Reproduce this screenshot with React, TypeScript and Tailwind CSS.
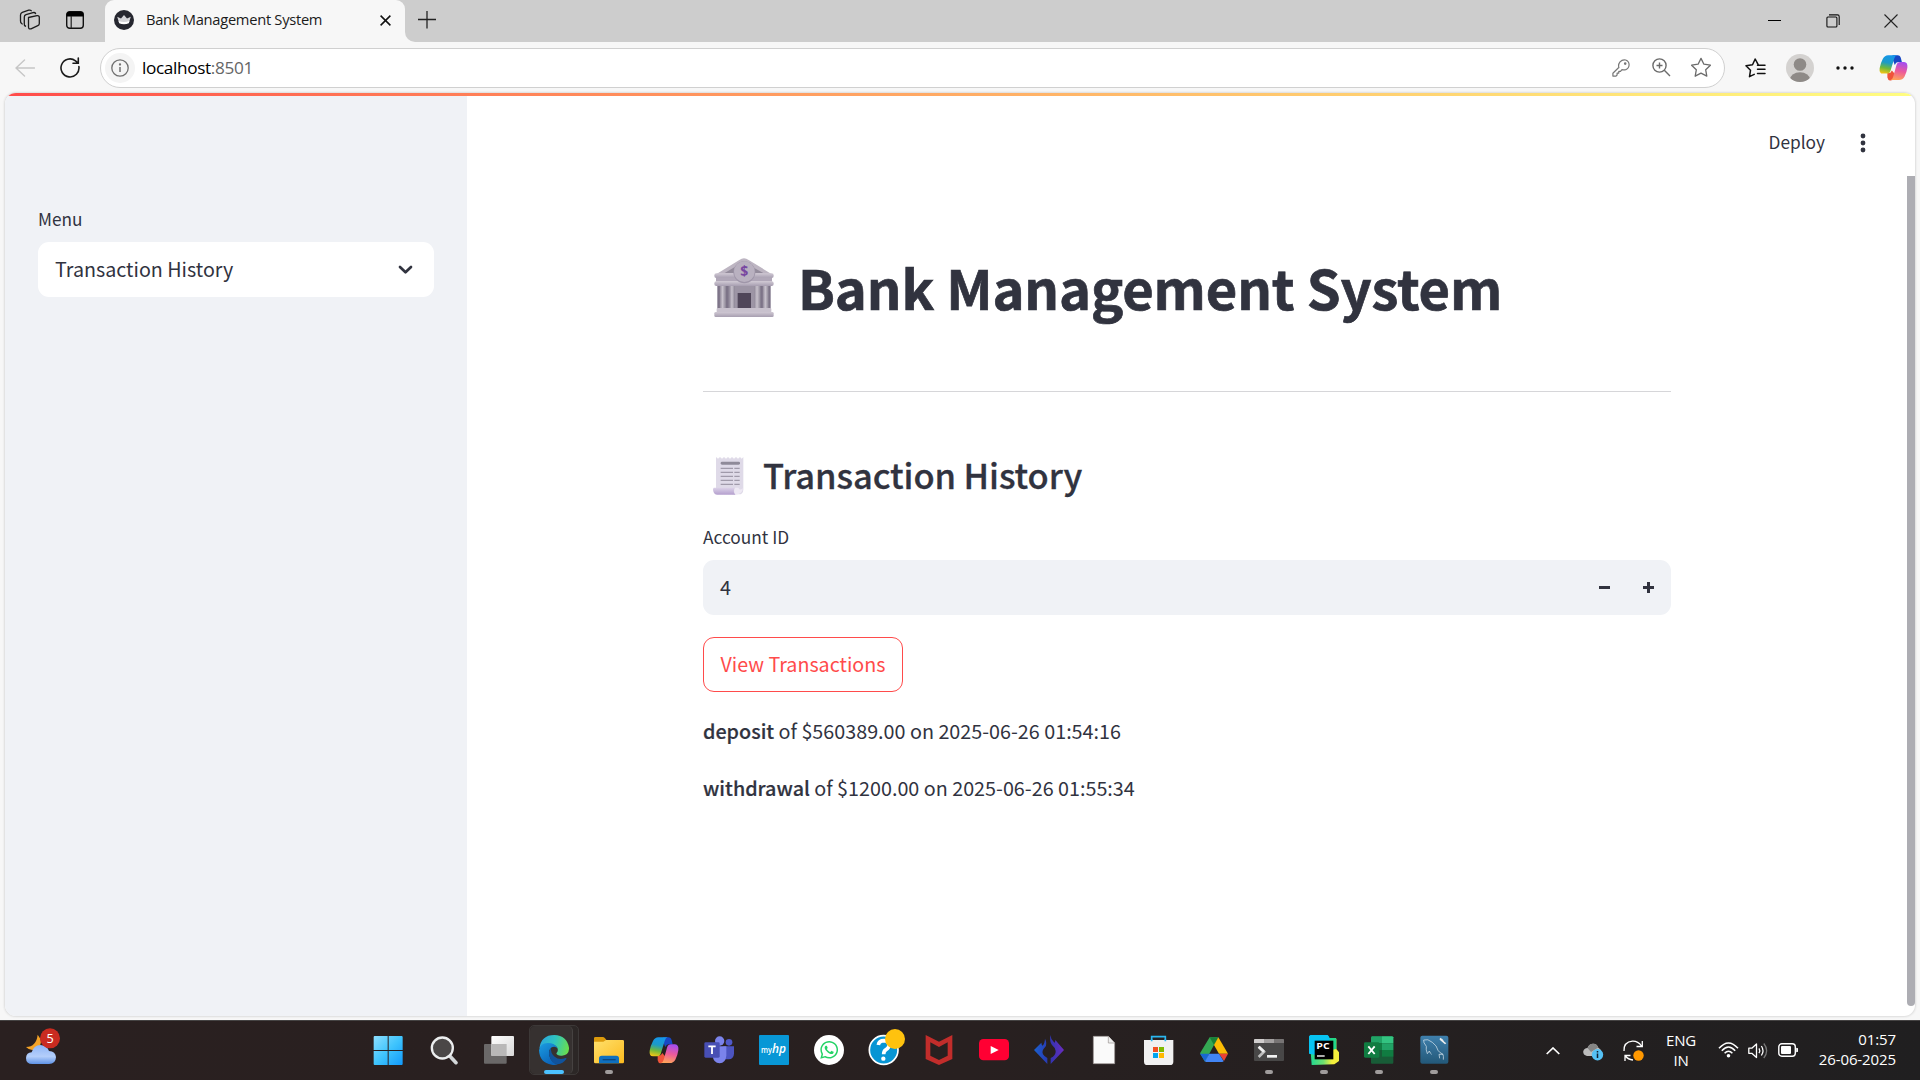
import React from "react";
import { FaWhatsapp } from "react-icons/fa";

const uiFont = "font-['Open_Sans','Noto_Sans',sans-serif]";
const appFont = "font-['Noto_Sans_CJK_SC',sans-serif]";

function TabBar() {
  return (
    <div className="flex h-[42px] w-full bg-[#cdcdcd]">
      <div className="flex w-[105px] items-center rounded-br-[10px] bg-[#cdcdcd] pb-[2px]">
        <svg className="ml-[19px]" width="22" height="22" viewBox="0 0 22 22" fill="none" stroke="#1b1b1b" strokeWidth="1.3" strokeLinejoin="round" strokeLinecap="round">
          <path d="M9.5 8.5 L18 6.6 Q20.3 6.3 20.3 8.5 V14.5 Q20.3 16 18.8 16.7 L12 19.8 Q9.5 20.5 9.5 18 Z" />
          <path d="M6.5 17.2 Q5 16.5 5.3 14.5 V8 Q5.3 6.3 7 5.7 L14 3.6 Q16 3.2 16.6 4.6" />
          <path d="M3.2 15 Q1.3 14 1.5 12 V6 Q1.6 4.1 3.3 3.4 L9.7 1.2 Q11.5 .8 12.2 1.7" />
        </svg>
        <svg className="ml-[25px]" width="18" height="18" viewBox="0 0 18 18">
          <rect x=".7" y=".7" width="16.6" height="16.6" rx="3" fill="none" stroke="#111" strokeWidth="1.4" />
          <path d="M.7 5.5 V3.5 Q.7 .7 3.5 .7 H14.5 Q17.3 .7 17.3 3.5 V5.5Z" fill="#000" />
          <path d="M5.2 5 V17" stroke="#222" strokeWidth="1.2" />
        </svg>
      </div>
      <div className="flex bg-[#f7f7f7]">
        <div className="-ml-[10px] h-[42px] w-[10px] rounded-br-[10px] bg-[#cdcdcd]" />
        <div className="h-[42px] w-[300px] bg-[#cdcdcd]">
          <div className="flex h-full items-center rounded-t-[9px] bg-[#f7f7f7] pb-[2px]">
            <svg className="ml-[9px]" width="20" height="20" viewBox="0 0 20 20">
              <circle cx="10" cy="10" r="10" fill="#262730" />
              <path d="M3.2 6.8 L7 8.6 L10 5 L13 8.6 L16.8 6.8 L15 12.6 Q10 15 5 12.6Z" fill="#d4d4d8" />
              <path d="M4.6 11 Q10 13 15.4 11 L14.8 13.2 Q10 15.2 5.2 13.2Z" fill="#fff" />
            </svg>
            <span className={`${uiFont} -mt-[2px] ml-[12px] w-[220px] whitespace-nowrap text-[14.7px] leading-5 tracking-[-0.28px] text-[#1b1b1b]`}>Bank Management System</span>
            <svg className="ml-[14px] mt-px" width="11" height="11" viewBox="0 0 11 11" stroke="#111" strokeWidth="1.5">
              <path d="M.6 .6 L10.4 10.4 M10.4 .6 L.6 10.4" />
            </svg>
          </div>
        </div>
        <div className="h-[42px] w-[10px] bg-[#f7f7f7]">
          <div className="h-full rounded-bl-[10px] bg-[#cdcdcd]" />
        </div>
      </div>
      <svg className="ml-[3px] mt-[11px]" width="18" height="18" viewBox="0 0 18 18" stroke="#222" strokeWidth="1.3">
        <path d="M9 0 V17.5 M0 8.5 H18" />
      </svg>
      <div className="flex-1" />
      <div className="flex h-[42px] items-center pr-[22px]">
        <svg width="13" height="13" viewBox="0 0 13 13" stroke="#000"><path d="M0 5.5 H13" /></svg>
        <svg className="ml-[45px]" width="14" height="14" viewBox="0 0 14 14" fill="none" stroke="#111" strokeWidth="1.1">
          <rect x=".9" y="3" width="10" height="10" rx="1" />
          <path d="M3 .9 H11.5 Q13.2 .9 13.2 2.8 V11" />
        </svg>
        <svg className="ml-[44px]" width="14" height="14" viewBox="0 0 14 14" stroke="#222" strokeWidth="1.1"><path d="M.5 .5 L13.5 13.5 M13.5 .5 L.5 13.5" /></svg>
      </div>
    </div>
  );
}

function CopilotIcon({ size, id }: { size: number; id: string }) {
  return (
    <svg width={size} height={size} viewBox="0 0 90 90">
      <defs>
        <linearGradient id={`${id}a`} x1="0.5" y1="0" x2="0.3" y2="1">
          <stop offset="0" stopColor="#1596ea" /><stop offset=".4" stopColor="#1c9bc8" /><stop offset=".7" stopColor="#6fb93c" /><stop offset="1" stopColor="#f3c515" />
        </linearGradient>
        <linearGradient id={`${id}b`} x1="0.6" y1="0" x2="0.4" y2="1">
          <stop offset="0" stopColor="#a44df0" /><stop offset=".5" stopColor="#ec5a9c" /><stop offset="1" stopColor="#ffa35a" />
        </linearGradient>
      </defs>
      <path d="M42 7 H58 Q66 7 68 16 L71 28 H60 Q52 28 49 37 L40 14Z" fill="#1747c4" />
      <path d="M26 62 Q36 64 40 54 L50 66 L46 78 Q43 85 36 85 H34 Q28 85 26 76Z" fill="#f0543a" />
      <path d="M28 7 H56 Q50 8 47 18 L36 54 Q33 64 25 64 H12 Q0 64 2 47 Q5 31 12 18 Q18 7 28 7Z" fill={`url(#${id}a)`} />
      <path d="M62 84 H36 Q42 82 44 74 L54 38 Q57 28 66 28 H78 Q90 29 88 46 Q86 61 79 74 Q73 84 62 84Z" fill={`url(#${id}b)`} />
    </svg>
  );
}

function Toolbar() {
  return (
    <div className="flex h-[51px] items-center bg-[#f7f7f7]">
      <svg className="ml-[15px]" width="20" height="18" viewBox="0 0 20 18" fill="none" stroke="#c6c6c6" strokeWidth="1.4" strokeLinecap="round">
        <path d="M9.5 1 L1 9 L9.5 17 M1 9 H19.5" />
      </svg>
      <svg className="ml-[25px]" width="20" height="21" viewBox="0 0 20 21" fill="none" stroke="#1b1b1b" strokeWidth="1.6" strokeLinecap="round">
        <path d="M18.9 9.6 A9 9 0 1 1 15.5 3.8 L18.2 6.2 M18.3 1 V6.3 H13" />
      </svg>
      <div className="ml-[20px] flex h-10 w-[1625px] items-center rounded-full border border-[#d0d0d0] bg-white">
        <div className="ml-1 flex size-[30px] items-center justify-center rounded-full bg-[#f4f4f4]">
          <svg width="18" height="18" viewBox="0 0 18 18" fill="none" stroke="#707070" strokeWidth="1.3">
            <circle cx="9" cy="9" r="8.2" /><path d="M9 8 V13" strokeWidth="1.5" /><circle cx="9" cy="5.5" r=".5" fill="#707070" />
          </svg>
        </div>
        <span className={`${uiFont} ml-[7px] text-[17.2px] leading-6 tracking-[-0.35px] text-black`}>localhost<span className="text-[#666]">:8501</span></span>
        <div className="flex-1" />
        <svg width="18" height="18" viewBox="0 0 18 18" fill="none" stroke="#777" strokeWidth="1.2" strokeLinejoin="round">
          <path d="M7 9.3 Q5.8 5.5 8 2.8 Q10.5 .2 13.7 1 Q17 2.2 17.1 5.7 Q17 9.3 13.8 10.6 Q11.7 11.2 10 10.6 L8.5 12.3 H6.8 V14.1 H5.1 V16 L4 17.1 H.9 V14.3 L7 8.3" /><circle cx="13.2" cy="4.6" r=".7" fill="#777" />
        </svg>
        <svg className="ml-[22px]" width="19" height="19" viewBox="0 0 19 19" fill="none" stroke="#6b6b6b" strokeWidth="1.4">
          <circle cx="7.5" cy="7.5" r="6.6" /><path d="M12.3 12.3 L18 18 M7.5 4.5 V10.5 M4.5 7.5 H10.5" />
        </svg>
        <svg className="ml-[19px] mr-[12px]" width="22" height="21" viewBox="0 0 22 21" fill="none" stroke="#6b6b6b" strokeWidth="1.3" strokeLinejoin="round">
          <path d="M11 1.4 L13.9 7.2 L20.4 8.2 L15.7 12.8 L16.8 19.2 L11 16.2 L5.2 19.2 L6.3 12.8 L1.6 8.2 L8.1 7.2Z" />
        </svg>
      </div>
      <svg className="ml-[20px]" width="21" height="20" viewBox="0 0 21 20" fill="none" stroke="#111" strokeWidth="1.5" strokeLinejoin="round" strokeLinecap="round">
        <path d="M13.4 7.2 L10.2 1 L7.5 6.7 L1 7.8 L5.5 12.3 L4.5 18.7 L9.2 16.4 M12.5 7.2 H20 M12.5 11.3 H20 M12.5 15.4 H20" />
      </svg>
      <svg className="ml-[20px]" width="28" height="28" viewBox="0 0 28 28">
        <clipPath id="avatar"><circle cx="14" cy="14" r="14" /></clipPath>
        <g clipPath="url(#avatar)"><rect width="28" height="28" fill="#d4d2d0" /><circle cx="14" cy="10.5" r="6.3" fill="#8e8a87" /><ellipse cx="14" cy="26" rx="10.2" ry="7.8" fill="#8e8a87" /></g>
      </svg>
      <svg className="ml-[22px]" width="18" height="4" viewBox="0 0 18 4" fill="#111"><circle cx="2" cy="2" r="1.7" /><circle cx="9" cy="2" r="1.7" /><circle cx="16" cy="2" r="1.7" /></svg>
      <div className="ml-[24.5px]"><CopilotIcon size={29} id="cpt" /></div>
    </div>
  );
}

function BankIcon() {
  return (
    <svg className="ml-[11px] shrink-0" width="60" height="59" viewBox="0 0 180 177">
      <defs>
        <linearGradient id="col" x1="0" x2="1"><stop offset="0" stopColor="#8f8798" /><stop offset=".45" stopColor="#c8c2cc" /><stop offset="1" stopColor="#8b8494" /></linearGradient>
        <linearGradient id="slab" x1="0" x2="0" y1="0" y2="1"><stop offset="0" stopColor="#cfc8d3" /><stop offset="1" stopColor="#a79eb0" /></linearGradient>
      </defs>
      <path d="M4 50 L76 6 Q90 -4 104 6 L176 50Z" fill="#bdb5c2" />
      <path d="M32 45 L88 12 L148 45Z" fill="#938b9b" />
      <rect x="10" y="78" width="160" height="75" fill="#7d7488" />
      <rect x="44" y="80" width="92" height="72" fill="#9d95a5" />
      <rect x="17" y="80" width="19" height="72" fill="url(#col)" />
      <rect x="46" y="80" width="17" height="72" fill="url(#col)" />
      <rect x="120" y="80" width="20" height="72" fill="url(#col)" />
      <rect x="146" y="80" width="18" height="72" fill="url(#col)" />
      <rect x="71" y="105" width="40" height="47" fill="#504659" />
      <rect x="1" y="46" width="178" height="14" rx="6" fill="url(#slab)" />
      <rect x="6" y="58" width="168" height="13" fill="#b0a7b8" />
      <rect x="1" y="70" width="178" height="14" rx="6" fill="url(#slab)" />
      <rect x="8" y="150" width="164" height="14" rx="3" fill="#c8c1cd" />
      <rect x="1" y="162" width="178" height="15" rx="4" fill="url(#slab)" />
      <circle cx="91" cy="43" r="33" fill="#9f96a9" />
      <circle cx="91" cy="41" r="31" fill="#b9b1c0" />
      <text x="91" y="55" textAnchor="middle" fontSize="42" fontWeight="700" fill="#7847a0" fontFamily="Open Sans, sans-serif">$</text>
    </svg>
  );
}

function ReceiptIcon() {
  return (
    <svg className="ml-[10px] mt-[3px] shrink-0" width="31" height="38" viewBox="0 0 93 114">
      <defs>
        <linearGradient id="roll" x1="0" x2="0" y1="0" y2="1"><stop offset="0" stopColor="#dcd3e8" /><stop offset="1" stopColor="#b49fce" /></linearGradient>
      </defs>
      <path d="M9 0 L15 5 L21 0 L27 5 L33 0 L39 5 L45 0 L51 5 L57 0 L63 5 L69 0 L75 5 L81 0 L86 5 L91 0 V98 Q90 112 78 112 H60 L9 100Z" fill="#dfdae8" />
      <path d="M2 92 H66 Q58 104 68 113 H12 Q0 112 0 96Z" fill="url(#roll)" />
      <path d="M66 92 Q60 104 68 113 Q88 112 90 94 Q80 102 76 92Z" fill="#eee9f4" />
      <rect x="23" y="14" width="58" height="9" rx="4" fill="#8f8a99" />
      <path d="M23 34 H60 M23 46 H60 M23 58 H60 M23 70 H60 M23 82 H60 M64 34 H80 M64 46 H80 M64 58 H80 M64 70 H80 M64 82 H80" stroke="#a09aaa" strokeWidth="3.6" />
    </svg>
  );
}

function Page() {
  return (
    <div className="h-[927px] bg-[#f7f7f7] pl-[5px]">
      <div className={`${appFont} flex h-[923px] w-[1910px] flex-col overflow-hidden rounded-[11px] bg-white text-[#31333f] shadow-[0_0_2px_1px_#dcdcdc]`}>
        <div className="h-[3px] shrink-0 bg-linear-to-r from-[#ff4b4b] to-[#fffd80]" />
        <div className="flex flex-1">
          <aside className="w-[462px] bg-[#f0f2f6] pl-[33px] pt-[111px]">
            <div className="h-6 text-[17.2px] leading-6">Menu</div>
            <div className="mt-[11px] flex h-[55px] w-[396px] items-center justify-between rounded-[11px] bg-white pl-[17px] pr-[21px] text-[19.7px] leading-[30px]">
              <span className="mb-[2px]">Transaction History</span>
              <svg width="15" height="10" viewBox="0 0 15 10" fill="none" stroke="#31333f" strokeWidth="2.7" strokeLinecap="round" strokeLinejoin="round"><path d="M2 2 L7.5 7.3 L13 2" /></svg>
            </div>
          </aside>
          <main className="flex flex-1 flex-col">
            <header className="flex h-20 items-start justify-end pt-[34px]">
              <span className="text-[17.3px] leading-6">Deploy</span>
              <svg className="ml-[35px] mr-[49px] mt-[3px]" width="6" height="20" viewBox="0 0 6 20" fill="#31333f"><circle cx="3" cy="3" r="2.4" /><circle cx="3" cy="10" r="2.4" /><circle cx="3" cy="17" r="2.4" /></svg>
            </header>
            <div className="flex flex-1">
              <div className="ml-[236px] w-[968px] pt-[71px]">
                <h1 className="flex h-20 items-center whitespace-nowrap text-[54.3px] font-bold leading-[80px] tracking-[-0.15px] [-webkit-text-stroke:0.7px_#31333f]">
                  <BankIcon /><span className="ml-[24px]">Bank Management System</span>
                </h1>
                <div className="mt-[64px] h-px bg-[#d6d6d9]" />
                <h2 className="mt-[58px] flex h-12 items-center whitespace-nowrap text-[34.5px] font-medium leading-[48px] tracking-[-0.1px] [-webkit-text-stroke:0.3px_#31333f]">
                  <ReceiptIcon /><span className="ml-[19px]">Transaction History</span>
                </h2>
                <div className="mt-[27px] h-6 text-[17.3px] leading-6">Account ID</div>
                <div className="mt-[11px] flex h-[55px] items-center rounded-[11px] bg-[#f0f2f6] pl-[17px] pr-[17px] text-[19.8px] leading-[30px]">
                  <span className="mb-[2px] flex-1">4</span>
                  <svg width="11" height="11" viewBox="0 0 11 11" fill="#31333f"><path d="M0 4 H11 V7 H0Z" /></svg>
                  <svg className="ml-[33px]" width="11" height="11" viewBox="0 0 11 11" fill="#31333f"><path d="M0 4 H11 V7 H0Z M4 0 H7 V11 H4Z" /></svg>
                </div>
                <button className="mt-[22px] flex h-[55px] w-[200px] items-center justify-center rounded-[11px] border border-[#ff4b4b] bg-white pb-[2px] text-[19.7px] leading-[30px] text-[#ff4b4b]">View Transactions</button>
                <p className="mt-[24px] h-[30px] text-[19.75px] leading-[30px]"><span className="font-medium [-webkit-text-stroke:0.2px_#31333f]">deposit</span> of $560389.00 on 2025-06-26 01:54:16</p>
                <p className="mt-[27px] h-[30px] text-[19.75px] leading-[30px]"><span className="font-medium [-webkit-text-stroke:0.2px_#31333f]">withdrawal</span> of $1200.00 on 2025-06-26 01:55:34</p>
              </div>
              <div className="flex-1" />
              <div className="h-[830px] w-2 rounded-b-[4px] bg-[#adadb3]" />
            </div>
          </main>
        </div>
      </div>
    </div>
  );
}

const icons: { name: string; running?: boolean; art: React.ReactNode }[] = [
  {
    name: "start",
    art: (
      <>
        <linearGradient id="win" gradientUnits="userSpaceOnUse" x1="0" y1="0" x2="90" y2="90"><stop offset="0" stopColor="#8fe0ff" /><stop offset=".5" stopColor="#3fc4fd" /><stop offset="1" stopColor="#0f97fb" /></linearGradient>
        <path d="M1 3 H41 V45 H-1 V5Z M44 3 H84 L86 5 V45 H44Z M-1 48 H41 V90 H1 L-1 88Z M44 48 H86 V88 L84 90 H44Z" fill="url(#win)" />
      </>
    ),
  },
  {
    name: "search",
    art: (
      <>
        <path d="M63 64 L81 83" stroke="#d3d7d9" strokeWidth="11" strokeLinecap="round" />
        <circle cx="40" cy="39" r="31.5" fill="#4a4747" stroke="#eceeef" strokeWidth="7" />
      </>
    ),
  },
  {
    name: "task view",
    art: (
      <>
        <linearGradient id="tv" x1="0" y1="0" x2="1" y2="1"><stop offset="0" stopColor="#fff" /><stop offset="1" stopColor="#d8d8d8" /></linearGradient>
        <rect x="0" y="27" width="68" height="59" rx="3" fill="#6a6868" />
        <rect x="22" y="3" width="68" height="60" rx="3" fill="url(#tv)" />
        <path d="M22 27 H68 V63 H25 Q22 63 22 60Z" fill="#b9b8b8" />
      </>
    ),
  },
  {
    name: "edge",
    art: (
      <>
        <linearGradient id="e1" x1="0" y1=".3" x2="1" y2=".5"><stop offset="0" stopColor="#2aa5df" /><stop offset=".5" stopColor="#2fc4c0" /><stop offset="1" stopColor="#68dd50" /></linearGradient>
        <linearGradient id="e2" x1="0" y1="0" x2="0.6" y2="1"><stop offset="0" stopColor="#1b9de2" /><stop offset="1" stopColor="#0b63b8" /></linearGradient>
        <path d="M1 41 Q6 0 46 0 Q84 2 90 38 Q91 60 69 62 Q54 63 52 55 Q60 47 54 37 Q46 27 26 27 Q10 29 1 41Z" fill="url(#e1)" />
        <path d="M0 46 Q4 24 26 24 Q48 24 56 40 Q48 32 38 37 Q28 44 31 62 Q36 82 56 88 Q48 91 38 89 Q2 84 0 46Z" fill="url(#e2)" />
        <path d="M36 38 Q28 48 31 62 Q36 84 56 88 Q72 86 82 72 Q84 68 79 69 Q60 76 47 65 Q34 54 36 38Z" fill="#10539c" />
      </>
    ),
  },
  {
    name: "file explorer",
    running: true,
    art: (
      <>
        <linearGradient id="fe" x1="0" y1="0" x2="1" y2="1"><stop offset="0" stopColor="#ffe06c" /><stop offset="1" stopColor="#fcba1e" /></linearGradient>
        <path d="M0 10 Q0 6 4 6 H26 Q30 6 33 10 L38 16 H60 V34 H0Z" fill="#dc9a0c" />
        <path d="M0 20 H28 L36 15 H86 Q90 15 90 19 V81 Q90 85 86 85 H4 Q0 85 0 81Z" fill="url(#fe)" />
        <path d="M15 85 V70 Q15 62 23 62 H67 Q75 62 75 70 V85Z" fill="#0f70bf" />
        <path d="M26 74 H65" stroke="#0b4780" strokeWidth="4" />
      </>
    ),
  },
  { name: "copilot", art: null },
  {
    name: "teams",
    art: (
      <>
        <circle cx="47" cy="18" r="14" fill="#7b83eb" /><circle cx="75" cy="22" r="10" fill="#5059c9" />
        <path d="M58 34 H90 V56 Q89 72 74 73 H60Z" fill="#4c54c0" />
        <path d="M26 34 H67 V62 Q65 84 47 85 Q28 84 26 62Z" fill="#7b83eb" />
        <rect x="1" y="22" width="46" height="46" rx="4" fill="#484fb4" />
        <path d="M13 34 H35 M24 34 V57" stroke="#fff" strokeWidth="5.5" />
      </>
    ),
  },
  {
    name: "myhp",
    art: (
      <>
        <rect width="90" height="90" rx="3" fill="#0897d6" />
        <text x="6" y="53" fontSize="26" fill="#fff" fontFamily="Open Sans, sans-serif" fontWeight="600" textLength="33" lengthAdjust="spacingAndGlyphs">my</text>
        <text x="39" y="55" fontSize="40" fill="#fff" fontFamily="Open Sans, sans-serif" fontWeight="600" fontStyle="italic" textLength="42" lengthAdjust="spacingAndGlyphs">hp</text>
      </>
    ),
  },
  { name: "whatsapp", art: (<><circle cx="45" cy="45" r="45" fill="#fff" /><FaWhatsapp x={15} y={14} size={61} color="#25d366" /></>) },
  {
    name: "help",
    art: (
      <>
        <circle cx="44" cy="45" r="43" fill="#0795d4" stroke="#fff" strokeWidth="5" />
        <path d="M28 30 Q30 17 45 17 Q60 18 60 31 Q60 39 51 44 Q44 48 44 58" fill="none" stroke="#fff" strokeWidth="11" />
        <circle cx="43" cy="71" r="6.5" fill="#fff" />
        <circle cx="78" cy="12" r="30" fill="#ffc20e" />
      </>
    ),
  },
  { name: "mcafee", art: <path fillRule="evenodd" d="M5 0 L45 20 L85 0 V72 L45 90 L5 72Z M19 22 V62 L45 75 L71 62 V22 L45 36Z" fill="#c22d2b" /> },
  { name: "youtube", art: (<><rect y="12" width="90" height="64" rx="13" fill="#ff0033" /><path d="M35 33 L59 45 L35 57Z" fill="#fff" /></>) },
  {
    name: "forge",
    art: (
      <>
        <linearGradient id="fl" gradientUnits="userSpaceOnUse" x1="0" y1="0" x2="90" y2="0"><stop offset="0" stopColor="#1a62cf" /><stop offset=".5" stopColor="#2b35b0" /><stop offset="1" stopColor="#6a2cc0" /></linearGradient>
        <path d="M0 45 L22 23 Q23 31 26 32 Q32 26 33 11 Q41 26 33 37 Q22 48 27 58 Q31 65 40 69 V87Z M49 0 Q50 12 60 22 Q63 27 64 15 L90 45 L50 87 V69 Q66 62 65 48 Q64 38 54 30 Q46 20 49 0Z" fill="url(#fl)" />
      </>
    ),
  },
  { name: "document", art: (<><path d="M13 4 H58 L77 24 V86 H13Z" fill="#fafafa" stroke="#99938f" strokeWidth="2" /><path d="M58 4 V24 H77" fill="#eee" stroke="#99938f" strokeWidth="2" /></>) },
  {
    name: "store",
    art: (
      <>
        <path d="M23 20 V5 H64 V20" fill="none" stroke="#2bb7f0" strokeWidth="5" />
        <path d="M0 15 H88 V80 Q88 90 78 90 H10 Q0 90 0 80Z" fill="#f1f1f1" />
        <path d="M23 19 V13 M64 19 V13" stroke="#2bb7f0" strokeWidth="5" />
        <rect x="27" y="36" width="15" height="15" fill="#f25022" /><rect x="45" y="36" width="15" height="15" fill="#7fba00" /><rect x="27" y="54" width="15" height="15" fill="#00a4ef" /><rect x="45" y="54" width="15" height="15" fill="#ffb900" />
      </>
    ),
  },
  {
    name: "drive",
    art: (
      <>
        <path d="M32 7 H58 L45 30 L18 80 L3 55Z" fill="#34a853" /><path d="M32 7 H58 L45 30Z" fill="#188038" />
        <path d="M58 7 L87 56 H60 L45 30Z" fill="#fbbc04" /><path d="M87 56 L75 78 L60 56Z" fill="#ea4335" />
        <path d="M3 56 H31 L18 80Z" fill="#1967d2" /><path d="M31 56 H60 L74 79 Q72 81 69 81 H21 L18 79Z" fill="#4285f4" />
      </>
    ),
  },
  {
    name: "terminal",
    running: true,
    art: (
      <>
        <rect y="12" width="90" height="66" rx="3" fill="#484747" /><path d="M0 24 V15 Q0 12 3 12 H30 V24Z" fill="#d0cdcd" /><path d="M30 12 H60 V24 H30Z" fill="#a3a0a0" /><path d="M60 12 H87 Q90 12 90 15 V24 H60Z" fill="#777474" />
        <path d="M14 35 L30 50 L14 66" fill="none" stroke="#bdbdbd" strokeWidth="8" /><path d="M14 35 L30 50" stroke="#eee" strokeWidth="8" /><rect x="39" y="60" width="30" height="8" fill="#f2f2f2" />
      </>
    ),
  },
  {
    name: "pycharm",
    running: true,
    art: (
      <>
        <linearGradient id="pc" x1="0" x2="1"><stop offset="0" stopColor="#1fd892" /><stop offset=".45" stopColor="#6fe070" /><stop offset=".75" stopColor="#f5f03c" /></linearGradient>
        <path d="M48 9 H78 Q82 9 82 13 V42 L90 52 V78 L76 88 L8 90 L5 50Z" fill="url(#pc)" />
        <path d="M58 9 H78 Q82 9 82 13 V42 L70 44Z" fill="#21d789" />
        <path d="M4 0 H56 Q60 2 62 10 L60 50 L20 60 L0 56 V4Z" fill="#07c3f2" />
        <rect x="17" y="17" width="56" height="56" fill="#000" />
        <text x="22" y="43" fontSize="27" fill="#fff" fontFamily="Open Sans, sans-serif" fontWeight="700" textLength="40" lengthAdjust="spacingAndGlyphs">PC</text>
        <rect x="24" y="61" width="23" height="4" fill="#fff" />
      </>
    ),
  },
  {
    name: "excel",
    running: true,
    art: (
      <>
        <rect x="21" y="4" width="67" height="82" rx="3" fill="#185c37" />
        <path d="M24 4 H54 V25 H21 V7Z" fill="#21a366" /><path d="M54 4 H85 L88 7 V25 H54Z" fill="#33c481" />
        <path d="M21 25 H54 V45 H21Z" fill="#107c41" /><path d="M54 25 H88 V45 H54Z" fill="#21a366" /><path d="M54 45 H88 V65 H54Z" fill="#107c41" />
        <rect x="0" y="22" width="46" height="46" rx="4" fill="#107c41" />
        <path d="M13 34 L32 57 M32 34 L13 57" stroke="#fff" strokeWidth="5.5" />
      </>
    ),
  },
  {
    name: "workbench",
    running: true,
    art: (
      <>
        <linearGradient id="wb" x1="0" x2="0" y1="0" y2="1"><stop offset="0" stopColor="#3f80ad" /><stop offset="1" stopColor="#235878" /></linearGradient>
        <rect x="4" y="2" width="84" height="84" rx="6" fill="url(#wb)" />
        <path d="M25 56 Q20 44 22 34 Q12 22 14 15 Q26 10 40 22 Q54 32 57 46 Q60 52 72 58 L60 58 L62 70 M25 56 L31 48 Q34 56 38 58 M72 58 Q74 64 73 74" fill="none" stroke="#d3e2ec" strokeWidth="2.2" />
        <path d="M63 8 L70 12 L76 20 L82 25 L78 28 L70 21 L62 14Z" fill="#eee" />
      </>
    ),
  },
];

function Taskbar() {
  return (
    <div className={`${uiFont} flex h-[60px] border-t border-[#454343] bg-linear-to-r from-[#2a2020] via-[#282020] to-[#201f20] text-[15px] text-white`}>
      <div className="w-[361px]">
        <svg className="ml-[25px] mt-[7px]" width="36" height="38" viewBox="0 0 108 114">
          <linearGradient id="cl" x1="0" x2="0" y1="0" y2="1"><stop offset="0" stopColor="#8fb5f5" /><stop offset=".6" stopColor="#b4cefa" /><stop offset="1" stopColor="#5f93e6" /></linearGradient>
          <path d="M38 20 Q58 44 38 60 Q20 74 3 57 Q34 56 38 20Z" fill="#f5a327" />
          <path d="M22 108 Q3 108 3 90 Q4 74 20 73 Q26 52 46 51 Q66 52 72 69 Q92 70 93 88 Q92 108 72 108Z" fill="url(#cl)" />
          <circle cx="75" cy="31" r="30" fill="#c92b20" />
          <text x="75" y="45" textAnchor="middle" fontSize="38" fill="#fff" fontFamily="Open Sans, sans-serif">5</text>
        </svg>
      </div>
      <div className="flex">
        {icons.map((it) => (
          <div key={it.name} className="flex w-[55.05px] flex-col items-center">
            {it.name === "edge" ? (
              <div className="mt-1 flex h-[50px] w-[50px] rounded-[5px] border border-[#3c3837] bg-[#2c2726]">
                <div className="flex h-[48px] w-[43px] flex-col items-center rounded-[5px] border-r border-[#464241] bg-[#363130] pl-[6px] pt-[9px]">
                  <svg className="shrink-0" width="30" height="30" viewBox="0 0 90 90">{it.art}</svg>
                  <div className="mt-[5px] h-1 w-5 shrink-0 rounded-full bg-[#4cc2ff]" />
                </div>
              </div>
            ) : (
              <>
                <div className="mt-[14px] size-[30px]">
                  {it.name === "copilot" ? <CopilotIcon size={30} id="cpb" /> : <svg className="overflow-visible" width="30" height="30" viewBox="0 0 90 90">{it.art}</svg>}
                </div>
                {it.running && <div className="mt-[5px] h-1 w-2 rounded-full bg-[#a09c9c]" />}
              </>
            )}
          </div>
        ))}
      </div>
      <div className="flex-1" />
      <div className="flex pr-[24px]">
        <svg className="mt-[26px]" width="14" height="8" viewBox="0 0 14 8" fill="none" stroke="#fff" strokeWidth="1.7"><path d="M.7 7 L7 1 L13.3 7" /></svg>
        <svg className="ml-[23px] mt-[21px]" width="21" height="19" viewBox="0 0 21 19">
          <path d="M4 14 Q0 13 .2 9.5 Q1 6 4.5 6 Q6.5 1.5 10.5 1.8 Q14 2 15.2 5.5 L18 8 V14Z" fill="#bcbcbc" /><path d="M4.5 6 Q6.5 1.5 10.5 1.8 Q14 2 15.2 5.5 L8 10Z" fill="#858585" />
          <circle cx="14.5" cy="12.7" r="5.7" fill="#55c1f5" /><path d="M14.5 11.5 V16 M14.5 9 V10.4" stroke="#123" strokeWidth="1.5" />
        </svg>
        <svg className="ml-[18px] mt-[18px]" width="22" height="23" viewBox="0 0 22 23" fill="none" stroke="#fff" strokeWidth="1.3">
          <path d="M2 12 Q1.5 3 10.5 2.2 Q16 2 19.5 7 M20.3 2 V7.5 H14.5 M3 22 V16.5 H8.5 M3.5 17 Q6 20.5 11 21" /><circle cx="16.5" cy="16.5" r="5.2" fill="#ff9800" stroke="none" />
        </svg>
        <div className="ml-[19px] mt-[9px] w-[36px] text-center leading-5 tracking-[-0.2px]">ENG<br />IN</div>
        <svg className="ml-[19px] mt-[20px]" width="21" height="18" viewBox="0 0 21 18" fill="none" stroke="#fff" strokeWidth="1.5">
          <path d="M1 7.3 Q10.5 -3.5 20 7.3 M3.8 9.8 Q10.5 2.2 17.2 9.8 M6.6 12.3 Q10.5 8 14.4 12.3" /><circle cx="10.5" cy="14.7" r="1.8" fill="#fff" stroke="none" />
        </svg>
        <svg className="ml-[9px] mt-[20px]" width="20" height="20" viewBox="0 0 20 20" fill="none" stroke="#fff" strokeWidth="1.3" strokeLinejoin="round">
          <path d="M.8 7.2 H3.8 L8.5 3 V16.5 L3.8 12.3 H.8Z M11 7.3 Q12.6 9.7 11 12.2 M13.4 5 Q16.6 9.7 13.4 14.5" /><path d="M15.8 2.5 Q21.5 9.7 15.8 17" stroke="#777" />
        </svg>
        <svg className="ml-[10px] mt-[22px]" width="21" height="14" viewBox="0 0 21 14"><rect x=".8" y=".8" width="16.5" height="12.4" rx="3" fill="none" stroke="#fff" strokeWidth="1.4" /><rect x="3" y="3" width="10" height="8" rx="1" fill="#fff" /><path d="M18.2 4.7 L20 5.2 V8.8 L18.2 9.3Z" fill="#fff" /></svg>
        <div className="ml-[17px] mt-[8px] w-[80px] whitespace-nowrap text-right leading-5 tracking-[-0.1px]">01:57<br />26-06-2025</div>
      </div>
    </div>
  );
}

export default function App() {
  return (
    <div className="flex h-[1080px] w-[1920px] flex-col overflow-hidden bg-[#f7f7f7]">
      <TabBar />
      <Toolbar />
      <Page />
      <Taskbar />
    </div>
  );
}
